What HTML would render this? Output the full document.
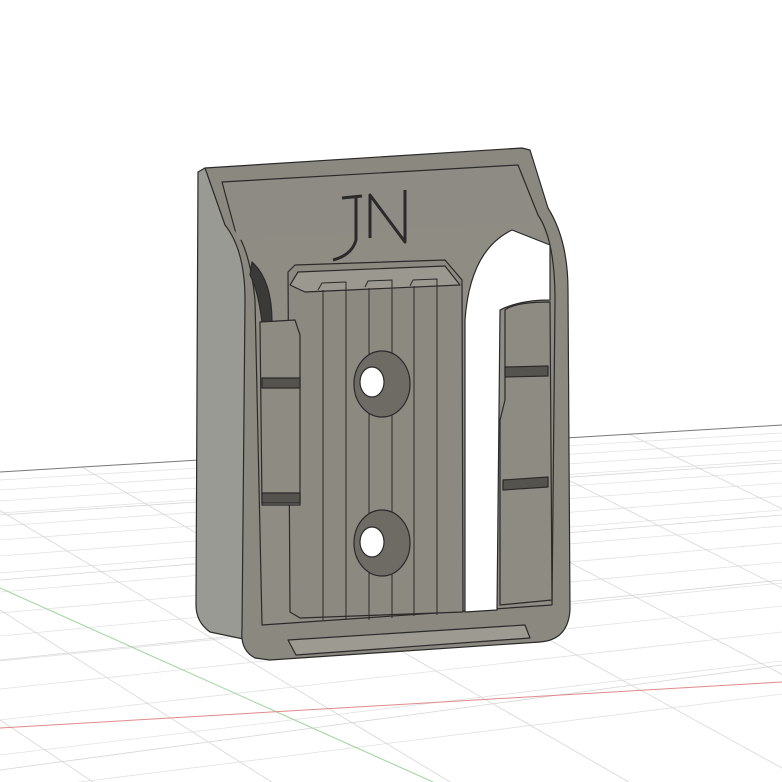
<!DOCTYPE html>
<html><head><meta charset="utf-8"><style>html,body{margin:0;padding:0;background:#fff;width:782px;height:782px;overflow:hidden}svg{display:block}</style></head><body>
<svg width="782" height="782" viewBox="0 0 782 782" xmlns="http://www.w3.org/2000/svg">
<defs><clipPath id="floor"><polygon points="0,472 782,425 782,782 0,782"/></clipPath></defs>
<rect width="782" height="782" fill="#fff"/>
<g clip-path="url(#floor)" stroke-width="0.8">
<g stroke="#e2e2e2">
<line x1="0" y1="480" x2="782" y2="433"/><line x1="0" y1="490" x2="782" y2="441"/><line x1="0" y1="501" x2="782" y2="450"/><line x1="0" y1="513" x2="782" y2="460"/><line x1="0" y1="526" x2="782" y2="471"/><line x1="0" y1="540" x2="782" y2="483"/><line x1="0" y1="556" x2="782" y2="496"/><line x1="0" y1="573" x2="782" y2="510"/><line x1="0" y1="592" x2="782" y2="526"/><line x1="0" y1="613" x2="782" y2="543"/><line x1="0" y1="636" x2="782" y2="562"/><line x1="0" y1="661" x2="782" y2="583"/><line x1="0" y1="689" x2="782" y2="606"/><line x1="0" y1="720" x2="782" y2="632"/><line x1="0" y1="755" x2="782" y2="661"/><line x1="0" y1="792" x2="782" y2="694"/>
</g>
<g stroke="#d6d6d6">
<line x1="-300" y1="420" x2="300" y2="800"/><line x1="-150" y1="420" x2="480" y2="800"/><line x1="0" y1="420" x2="660" y2="800"/><line x1="150" y1="420" x2="840" y2="800"/><line x1="300" y1="420" x2="1020" y2="800"/><line x1="450" y1="420" x2="1200" y2="800"/><line x1="600" y1="420" x2="1380" y2="800"/><line x1="-450" y1="420" x2="120" y2="800"/>
<line x1="0" y1="515" x2="782" y2="463"/><line x1="0" y1="580" x2="782" y2="515"/><line x1="0" y1="660" x2="782" y2="580"/><line x1="0" y1="770" x2="782" y2="665"/>
</g>
</g>
<line x1="0" y1="472" x2="782" y2="425" stroke="#777" stroke-width="1"/>
<line x1="0" y1="588" x2="433" y2="782" stroke="#9ed49e" stroke-width="1"/>
<line x1="0" y1="728" x2="782" y2="682" stroke="#e28a8a" stroke-width="1"/>

<g stroke="#2a2a2a" stroke-width="1.2" stroke-linejoin="round">
<path d="M198,172 L205,168 L245,240 L248,640 L210,632 Q196,622 196,605 Z" fill="#9a9a95"/>
<path d="M205,168 L522,148 L530,150 L548,208 Q568,240 568,290 L570,610 Q568,640 540,642 L270,660 L255,658 Q240,650 242,630 L245,300 Q245,250 225,225 Z" fill="#8b8880"/>
<path d="M222,182 L518,165 L538,215 Q555,240 555,300 L552,605 L262,625 L255,300 Q250,250 235,230 Z" fill="#8f8c84"/>
<path d="M238,240 L225,185 L515,168 L535,222 Z" fill="#8e8b84" stroke="none"/>
<path d="M512,230 Q470,250 465,320 L465,612 L497,610 L500,310 Q520,300 550,300 L550,245 Z" fill="#fff"/>
<path d="M252,262 Q272,280 272,322 L262,322 Q258,290 250,275 Z" fill="#3a3a38"/>
<path d="M288,272 L295,265 L445,260 L462,280 L463,612 L300,618 L290,612 Z" fill="#8c8980"/>
<path d="M290,285 L298,272 L445,266 L460,285 L305,292 Z" fill="#9b988f"/>
<g fill="none" stroke="#2a2a2a" stroke-width="1">
<line x1="323" y1="290" x2="323" y2="620"/><line x1="346" y1="289" x2="346" y2="620"/><line x1="369" y1="288" x2="369" y2="620"/><line x1="392" y1="287" x2="392" y2="618"/><line x1="414" y1="286" x2="414" y2="616"/><line x1="437" y1="285" x2="437" y2="615"/>
<path d="M318,290 L322,283 L346,282 L346,289"/><path d="M365,287 L368,281 L392,280 L392,287"/><path d="M410,286 L413,280 L437,279 L437,285"/>
</g>
<ellipse cx="382" cy="384" rx="28" ry="33" fill="#6e6b65"/>
<ellipse cx="372" cy="382" rx="12" ry="15" fill="#fff"/>
<ellipse cx="382" cy="543" rx="28" ry="33" fill="#6e6b65"/>
<ellipse cx="372" cy="542" rx="12" ry="15" fill="#fff"/>
<path d="M260,322 L295,320 L300,335 L300,505 L262,505 Z" fill="#8e8b83"/>
<path d="M262,378 L300,378 L300,388 L262,388 Z" fill="#55534e"/>
<path d="M262,493 L300,493 L300,503 L262,503 Z" fill="#55534e"/>
<path d="M505,310 Q515,302 550,302 L552,600 L500,605 L500,420 L505,400 Z" fill="#8e8b83"/>
<path d="M505,367 L548,366 L548,376 L505,377 Z" fill="#55534e"/>
<path d="M503,480 L548,477 L548,487 L503,490 Z" fill="#55534e"/>
<path d="M288,640 L525,625 L530,638 L296,655 Z" fill="#9d9a92"/>
<path d="M342,198 L362,196 M356,198 L356,240 Q352,255 333,260" fill="none" stroke="#2a2a2a" stroke-width="3"/>
<path d="M370,238 L370,195 L405,242 L405,190" fill="none" stroke="#2a2a2a" stroke-width="3"/>
</g>
</svg>
</body></html>
